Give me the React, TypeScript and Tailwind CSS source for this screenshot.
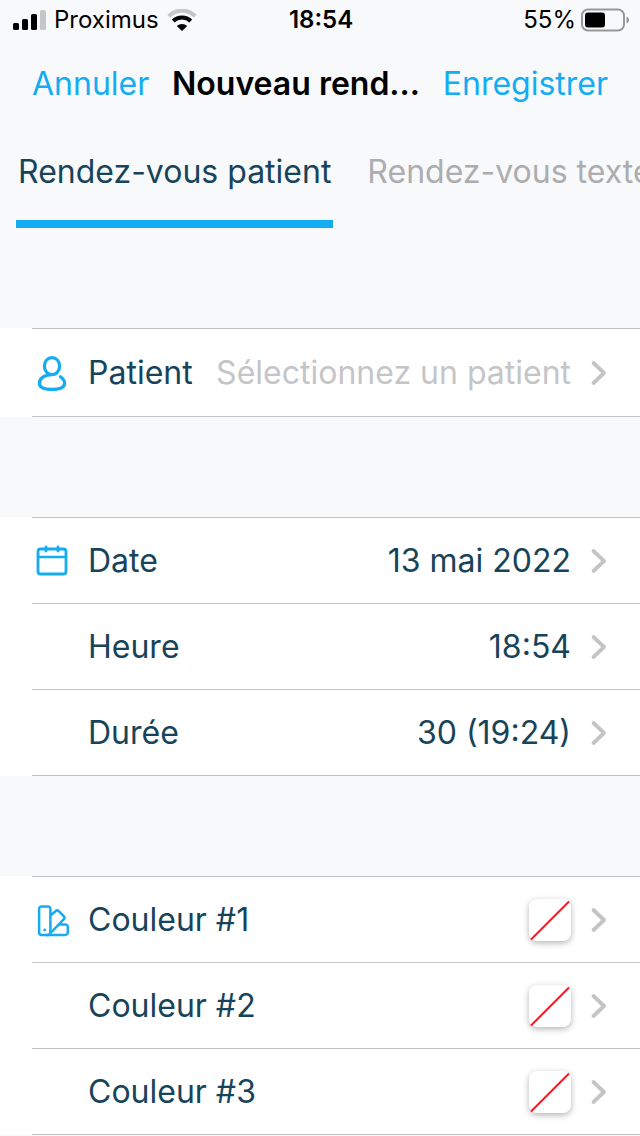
import React from 'react';

const tabs = ['Rendez-vous patient', 'Rendez-vous texte'];

const PatientIcon: React.FC = () => (
  <svg width="40" height="40" viewBox="0 0 40 40" fill="none" stroke="#14adf2" strokeWidth="3.2" strokeLinecap="round" aria-hidden="true">
    <path d="M20 21.6c-4.6 0-7.6-4.2-7.6-8.6C12.4 8.200 15.600 4.600 20 4.600s7.600 3.600 7.600 8.400c0 4.400-3 8.600-7.600 8.600-6.500 0-12.600 3-12.600 8.600 0 4.300 5.500 6.200 12.600 6.200s12.600-1.900 12.600-6.200c0-3-2-4.800-4.200-6.400" />
  </svg>
);

const CalendarIcon: React.FC = () => (
  <svg width="40" height="40" viewBox="0 0 40 40" fill="none" stroke="#14adf2" strokeWidth="2.8" strokeLinecap="round" aria-hidden="true">
    <rect x="6" y="8" width="28" height="25" rx="2.5" />
    <path d="M6 16h28" strokeWidth="2.4" />
    <path d="M14 6v4M26 6v4" />
  </svg>
);

const SwatchIcon: React.FC = () => (
  <svg width="40" height="40" viewBox="0 0 40 40" fill="none" stroke="#14adf2" strokeWidth="2.5" strokeLinejoin="round" aria-hidden="true">
    <path d="M9.5 6.500h6.500a2.400 2.400 0 0 1 2.400 2.400V32.500a2.400 2.400 0 0 1-2.400 2.400H9.500a2.400 2.400 0 0 1-2.400-2.400V8.900a2.400 2.400 0 0 1 2.400-2.400z" />
    <path d="M18.500 15.500l5-4.300a2.400 2.400 0 0 1 3.300 0l4.900 4.900a2.400 2.400 0 0 1 0 3.300L18.500 33" />
    <path d="M27 24.500h6.400a2.400 2.400 0 0 1 2.400 2.400v5.600a2.400 2.400 0 0 1-2.400 2.400H14" />
    <circle cx="12.700" cy="30" r="1.400" fill="#14adf2" stroke="none" />
  </svg>
);

const Chevron: React.FC = () => (
  <svg className="shrink-0" width="20" height="28" viewBox="0 0 20 28" fill="none" stroke="#c4c4c6" strokeWidth="3.8" strokeLinecap="round" strokeLinejoin="round" aria-hidden="true">
    <path d="M5.500 4L16 14 5.500 24" />
  </svg>
);

const NoColor: React.FC = () => (
  <span className="block size-[42px] rounded-lg bg-white shadow-[0_2px_6px_rgba(0,0,0,0.3)]">
    <svg width="42" height="42" viewBox="0 0 42 42" stroke="#ff1420" strokeWidth="2" role="img" aria-label="Aucune couleur">
      <path d="M2 40.500L40 2.500" />
    </svg>
  </span>
);

interface RowProps {
  label: string;
  icon?: React.ReactNode;
  tall?: boolean;
  children: React.ReactNode;
}

const Row: React.FC<RowProps> = ({ label, icon, tall, children }) => (
  <li>
    <button
      type="button"
      className={`flex w-full items-center border-b border-[#c4c4c7] pr-8 text-left ${tall ? 'h-[88px]' : 'h-[86px]'}`}
    >
      <span className="mr-4 size-10 shrink-0">{icon}</span>
      <span className="shrink-0 whitespace-nowrap">{label}</span>
      <span className="mr-[17px] flex min-w-0 flex-1 justify-end whitespace-nowrap">{children}</span>
      <Chevron />
    </button>
  </li>
);

const Section: React.FC<{ children: React.ReactNode }> = ({ children }) => (
  <section className="mt-[100px] bg-white pl-8">
    <ul className="border-t border-[#c4c4c7]">{children}</ul>
  </section>
);

const StatusBar: React.FC = () => (
  <div className="grid h-10 grid-cols-3 items-center pr-2.5 pl-3 text-2xl text-black">
    <div className="flex items-center gap-2">
      <svg width="34" height="22" viewBox="0 0 34 22" aria-hidden="true">
        <rect x="1" y="14" width="6" height="7" rx="1.5" />
        <rect x="10" y="10" width="6" height="11" rx="1.5" />
        <rect x="19" y="5" width="6" height="16" rx="1.5" />
        <rect x="28" y="1" width="6" height="20" rx="1.5" fill="#c5c6c8" />
      </svg>
      <span>Proximus</span>
      <svg width="30" height="22" viewBox="0 0 30 22" fill="none" aria-hidden="true">
        <path d="M1.800 7.200C9-.2 21-.2 28.200 7.200" stroke="#c5c6c8" strokeWidth="4" />
        <path d="M6.200 12c4.900-4.700 12.700-4.700 17.600 0" stroke="#000" strokeWidth="4" />
        <path d="M9.800 17c2.900-2.800 7.500-2.800 10.400 0L15 22z" fill="#000" />
      </svg>
    </div>
    <span className="text-center font-semibold">18:54</span>
    <div className="flex items-center justify-end gap-1">
      <span>55%</span>
      <svg width="50" height="24" viewBox="0 0 50 24" aria-hidden="true">
        <rect x="2" y="1.500" width="42" height="21" rx="6" fill="none" stroke="#97989a" strokeWidth="2" />
        <rect x="5" y="4.500" width="20" height="15" rx="3" />
        <path d="M46.500 8.500c1.500.6 2.500 1.800 2.500 3.500s-1 2.900-2.500 3.500z" fill="#97989a" />
      </svg>
    </div>
  </div>
);

const App: React.FC = () => {
  return (
    <main className="min-h-screen overflow-hidden bg-[#f8f9fb] font-['Inter',sans-serif] text-[32px] leading-10 text-[#17445a]">
      <StatusBar />
      <header className="flex h-[88px] items-center justify-between px-8">
        <button type="button" className="text-[#14adf2]">Annuler</button>
        <h1 className="font-semibold text-black">Nouveau rend...</h1>
        <button type="button" className="text-[#14adf2]">Enregistrer</button>
      </header>

      <nav className="flex h-[100px] gap-8 overflow-hidden pl-4 whitespace-nowrap" role="tablist">
        {tabs.map((tab, index) => (
          <button
            key={tab}
            type="button"
            role="tab"
            aria-selected={index === 0}
            className={`shrink-0 border-b-8 px-0.5 pb-1 ${index === 0 ? 'border-[#14adf2]' : 'border-transparent text-[#adadaf]'}`}
          >
            {tab}
          </button>
        ))}
      </nav>

      <Section>
        <Row label="Patient" icon={<PatientIcon />} tall>
          <span className="text-[#c5c5c7]">Sélectionnez un patient</span>
        </Row>
      </Section>

      <Section>
        <Row label="Date" icon={<CalendarIcon />}>13 mai 2022</Row>
        <Row label="Heure">18:54</Row>
        <Row label="Durée">30 (19:24)</Row>
      </Section>

      <Section>
        <Row label="Couleur #1" icon={<SwatchIcon />}><NoColor /></Row>
        <Row label="Couleur #2"><NoColor /></Row>
        <Row label="Couleur #3"><NoColor /></Row>
      </Section>
    </main>
  );
};

export default App;
